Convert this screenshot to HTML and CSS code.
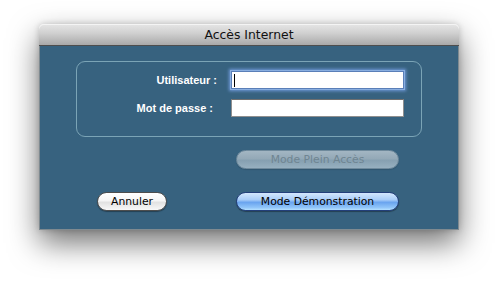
FILE: index.html
```html
<!DOCTYPE html>
<html lang="fr">
<head>
<meta charset="utf-8">
<title>Accès Internet</title>
<link rel="stylesheet" href="styles.css">
</head>
<body>
<div class="window">
  <div class="titlebar">Accès Internet</div>
  <div class="content">
    <div class="group">
      <div class="label">Utilisateur :</div>
      <div class="field focus"><span class="caret"></span></div>
      <div class="label label2">Mot de passe :</div>
      <div class="field"></div>
    </div>
    <div class="actions">
      <div></div>
      <div class="btn disabled">Mode Plein Accès</div>
      <div class="btn white">Annuler</div>
      <div class="btn blue">Mode Démonstration</div>
    </div>
  </div>
</div>
</body>
</html>
```
FILE: styles.css
```css
html, body {
  margin: 0;
  padding: 0;
  background: #ffffff;
}
body {
  width: 499px;
  height: 286px;
  overflow: hidden;
  padding-top: 24px;
  box-sizing: border-box;
}
.window {
  margin-left: 39px;
  width: 420px;
  border-radius: 5px 5px 0 0;
  box-shadow: 0 13px 30px rgba(0,0,0,0.55), 0 0 6px rgba(0,0,0,0.18);
}
.titlebar {
  height: 21px;
  border-radius: 5px 5px 0 0;
  background: linear-gradient(#e6e6e6 0%, #cfcfcf 45%, #a9a9a9 100%);
  border-bottom: 1px solid #4e4e4e;
  box-shadow: inset 0 1px 0 #f4f4f4;
  font-family: "DejaVu Sans", sans-serif;
  font-size: 12.4px;
  color: #111;
  text-align: center;
  line-height: 22px;
}
.content {
  background: #37627f;
  border: 1px solid #7f8a90;
  border-top: none;
  height: 184px;
  box-sizing: border-box;
  padding-top: 15px;
}
.group {
  margin: 0 36px;
  height: 76px;
  box-sizing: border-box;
  border: 1px solid #7ba4b6;
  border-radius: 9px;
  display: grid;
  grid-template-columns: 140px 173px;
  column-gap: 14px;
  row-gap: 10px;
  grid-auto-rows: 18px;
  padding-top: 9px;
}
.label {
  font-family: "Liberation Sans", Arial, sans-serif;
  font-weight: bold;
  font-size: 11px;
  color: #ffffff;
  text-align: right;
  line-height: 18px;
}
.label2 {
  padding-right: 4px;
}
.field {
  background: #ffffff;
  border: 1px solid #8f8f8f;
  border-top-color: #6f6f6f;
  box-sizing: border-box;
  display: flex;
  align-items: center;
}
.field.focus {
  border-color: #5a7fb8;
  box-shadow: 0 0 0 1px #89aee0, 0 0 3px 2px #6f99d8;
}
.caret {
  display: inline-block;
  width: 1px;
  height: 13px;
  background: #000;
  margin-left: 2px;
}
.actions {
  display: grid;
  grid-template-columns: 70px 163px;
  column-gap: 69px;
  row-gap: 22px;
  grid-auto-rows: 20px;
  margin: 13px 0 0 57px;
}
.btn {
  box-sizing: border-box;
  height: 19px;
  border-radius: 10px;
  font-family: "DejaVu Sans", sans-serif;
  font-size: 10.8px;
  line-height: 17px;
  text-align: center;
  color: #000;
}
.white {
  background: linear-gradient(#ffffff 0%, #f6f6f6 45%, #e2e2e2 55%, #f8f8f8 100%);
  border: 1px solid #4d4d4d;
  box-shadow: 0 1px 1px rgba(0,0,0,0.35);
}
.blue {
  background: linear-gradient(#d3e7fd 0%, #a9cdf8 40%, #6aa4ef 55%, #8fc4f9 85%, #b5e0ff 100%);
  border: 1px solid #233f7a;
  box-shadow: 0 1px 1px rgba(0,0,0,0.35);
}
.disabled {
  background: linear-gradient(#a3b6c3 0%, #94a9b7 45%, #86a0b1 55%, #97b0c0 100%);
  border: 1px solid #6f8a9c;
  color: #6f8592;
  box-shadow: 0 1px 1px rgba(0,0,0,0.12);
}
```
